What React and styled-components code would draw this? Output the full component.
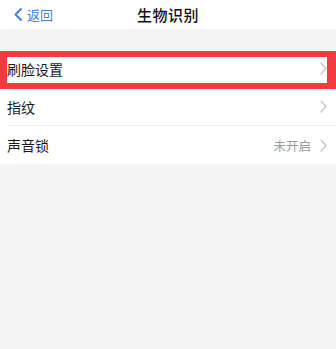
import React from 'react'
import styled, { createGlobalStyle } from 'styled-components';

const GlobalStyle = createGlobalStyle`
    html, body {
        margin: 0;
        padding: 0;
        background-color: #f4f4f4;
        font-family: "Noto Sans CJK SC", "Noto Sans", sans-serif;
    }
`;

function Chevron({ color, width, height, stroke }) {
  return (
    <svg width={width} height={height} viewBox={`0 0 ${width} ${height}`} fill="none">
      <path
        d={`M1 1 L${width - 1} ${height / 2} L1 ${height - 1}`}
        stroke={color}
        strokeWidth={stroke}
        strokeLinecap="round"
        strokeLinejoin="round"
      />
    </svg>
  )
}

function BackArrow() {
  return (
    <svg width="8" height="13" viewBox="0 0 8 13" fill="none">
      <path d="M7 1 L1.5 6.5 L7 12" stroke="#3f7fd3" strokeWidth="1.8" strokeLinecap="round" strokeLinejoin="round" />
    </svg>
  )
}

const items = [
  { label: '刷脸设置' },
  { label: '指纹' },
  { label: '声音锁', value: '未开启' },
];

function App() {
  return (
    <MainContainer>
        <GlobalStyle />
        <Header>
            <BackBtn>
                <BackArrow />
                <BackText>返回</BackText>
            </BackBtn>
            <Title>生物识别</Title>
        </Header>
        <List>
            {items.map((item, i) => (
                <Row key={item.label} last={i === items.length - 1}>
                    <Label>{item.label}</Label>
                    <RightBox>
                        {item.value && <Value>{item.value}</Value>}
                        <Chevron color="#c4c4c8" width={7} height={13} stroke={1.2} />
                    </RightBox>
                </Row>
            ))}
            <Highlight />
        </List>
    </MainContainer>
  )
}

const MainContainer = styled.div`
    width: 336px;
    height: 349px;
    background-color: #f4f4f4;
`;
const Header = styled.div`
    height: 29px;
    background-color: #fff;
    position: relative;
    display: flex;
    align-items: center;
    justify-content: center;
`;
const BackBtn = styled.div`
    position: absolute;
    left: 14px;
    top: 0;
    bottom: 0;
    display: flex;
    align-items: center;
    gap: 5px;
`;
const BackText = styled.span`
    font-size: 13px;
    color: #3f7fd3;
    line-height: 1;
`;
const Title = styled.h3`
    margin: 0;
    font-size: 15px;
    font-weight: 500;
    color: #111;
    letter-spacing: 0.5px;
`;
const List = styled.div`
    margin-top: 21px;
    background-color: #fff;
    position: relative;
`;
const Row = styled.div`
    height: 38px;
    margin-left: 8px;
    padding-right: 9px;
    display: flex;
    align-items: center;
    justify-content: space-between;
    border-bottom: ${({ last }) => (last ? 'none' : '1px solid #efefef')};
    box-sizing: border-box;
`;
const Label = styled.span`
    font-size: 14px;
    color: #1a1a1a;
    margin-left: -1px;
`;
const RightBox = styled.div`
    display: flex;
    align-items: center;
    gap: 9px;
`;
const Value = styled.span`
    font-size: 12.5px;
    color: #9a9a9a;
`;
const Highlight = styled.div`
    position: absolute;
    left: 0;
    top: 1px;
    width: 336px;
    height: 38px;
    box-sizing: border-box;
    border-style: solid;
    border-color: #f33b3f;
    border-width: 6px 9px 6px 7px;
    pointer-events: none;
`;

export default App
